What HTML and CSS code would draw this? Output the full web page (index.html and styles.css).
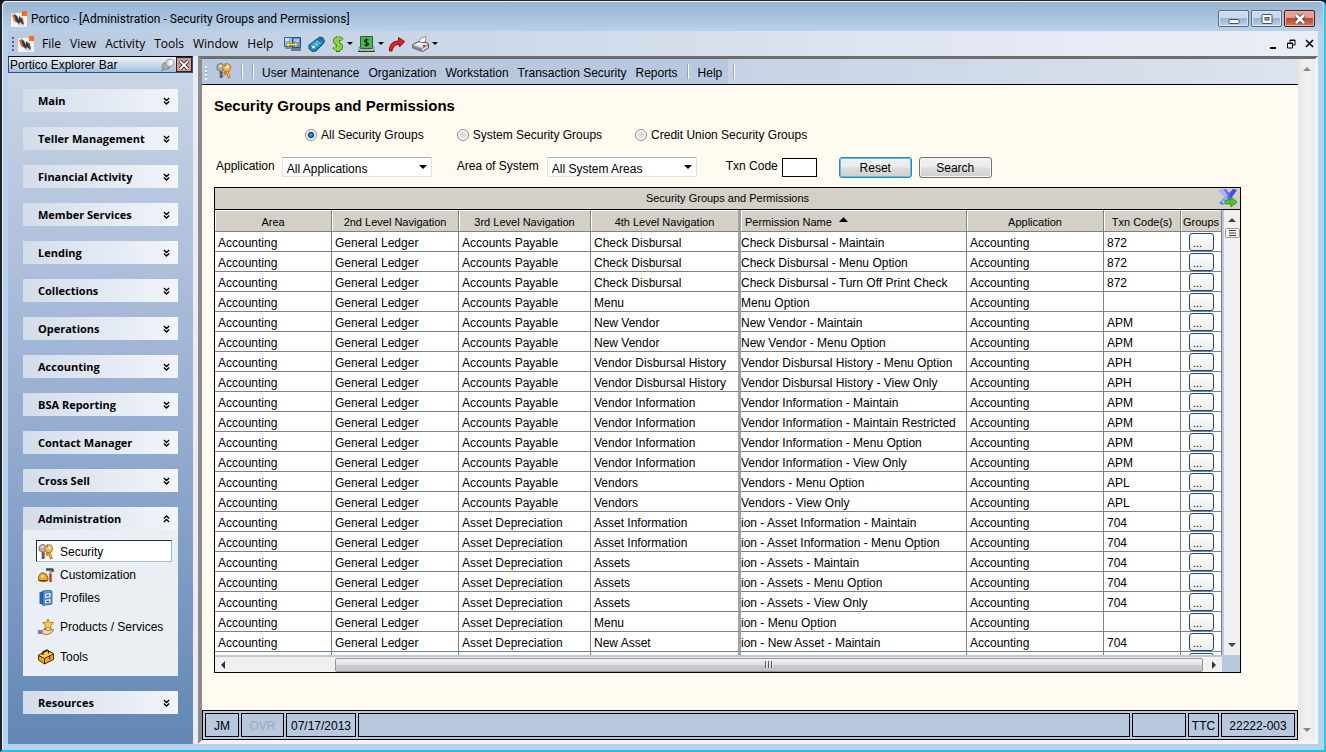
FILE: index.html
```html
<!DOCTYPE html>
<html lang="en">
<head>
<meta charset="utf-8">
<title>Portico - [Administration - Security Groups and Permissions]</title>
<link rel="stylesheet" href="styles.css">
</head>
<body>
<svg class="defs" aria-hidden="true">
  <symbol id="logo" viewBox="0 0 16 16"><path fill="#f4f1ee" d="M0 2h16v14H0z"/><path fill="#b9b4ae" d="M0 3l4-1 9 13H8z" opacity=".5"/><path fill="#e8721c" d="M1 4l3 0 2 8-3-2zM9 6l3 1 1 6-2 0z"/><path fill="#2c3a52" d="M3 3l3 2 2 4V5l3 3 2 6-4-3-1 2-3-3z"/><path fill="#ff6a13" d="M11 0h5v5h-5z"/></symbol>
  <symbol id="keys" viewBox="0 0 16 16"><path d="M5 7v8" stroke="#625c58" stroke-width="2.600"/><path d="M5.500 10h1.800M5.500 13h1.800" stroke="#625c58" stroke-width="1.400"/><path fill="#b5aca4" stroke="#6d6661" stroke-width=".8" d="M2.500 1l3.500-.6L8 3v4l-3 1.500-4-2V3z"/><path fill="#ded9d4" d="M3 2h3v2H3z"/><path d="M10.500 7l3 8" stroke="#b9741a" stroke-width="3"/><path d="M10.500 7l2.800 7" stroke="#f3b346" stroke-width="1.400"/><path d="M9 8v4" stroke="#c9811d" stroke-width="1.800"/><path fill="#f4b752" stroke="#b06a14" stroke-width=".8" d="M9 .6l4 .4 2 3-1.500 4-4 .8L6.800 6V3z"/><path fill="#fff0cf" d="M9.500 2h3v3h-3z"/><circle cx="9.500" cy="2.500" r="1" fill="#7d6b58"/></symbol>
  <symbol id="down" viewBox="0 0 8 9"><path d="M1 1l3 3 3-3M1 5l3 3 3-3" fill="none" stroke="#000" stroke-width="1.500"/></symbol>
  <symbol id="up" viewBox="0 0 8 9"><path d="M1 4l3-3 3 3M1 8l3-3 3 3" fill="none" stroke="#000" stroke-width="1.500"/></symbol>
  <symbol id="tri" viewBox="0 0 8 4"><path d="M0 0h8L4 4z"/></symbol>
</svg>
<div class="window">
  <header class="titlebar">
    <svg class="i16"><use href="#logo"/></svg>
    <h1 class="title">Portico - [Administration - Security Groups and Permissions]</h1>
    <div class="caption-buttons">
      <button class="cap" aria-label="Minimize"><svg width="12" height="12"><rect x="1" y="6.500" width="10" height="4" rx="1" fill="#fff" stroke="#4b5263"/></svg></button>
      <button class="cap" aria-label="Restore"><svg width="12" height="12"><rect x="1" y="1.500" width="10" height="9" rx="1" fill="#fff" stroke="#4b5263"/><rect x="4" y="4.500" width="4" height="2.500" fill="#8fb0d4" stroke="#4b5263"/></svg></button>
      <button class="cap close" aria-label="Close"><svg width="14" height="12"><path d="M3 2l8 8M11 2l-8 8" stroke="#4b4250" stroke-width="4.500"/><path d="M3 2l8 8M11 2l-8 8" stroke="#fff" stroke-width="2.600"/></svg></button>
    </div>
  </header>

  <nav class="menubar" aria-label="Main menu">
    <span class="grip"></span>
    <svg class="i16 menu-logo"><use href="#logo"/></svg>
    <div class="menus">
      <button>File</button><button>View</button><button>Activity</button><button>Tools</button><button>Window</button><button>Help</button>
    </div>
    <div class="tools">
      <button aria-label="Connect"><svg width="17" height="16" viewBox="0 0 17 16"><path fill="#8dbbf6" stroke="#2f5fae" d="M.5 1.500h8v9h-8z"/><path fill="#c7e0ff" d="M1 2h4v3H1z"/><path fill="#6d93c5" d="M1 11h7v2H1z"/><path fill="#5b92ea" stroke="#234c92" d="M8.500 1.500h8v10h-8z"/><path fill="#a4c8fb" d="M10 3h5v3h-5z"/><path fill="#6b7c98" d="M7 12h10v3H7z"/><path fill="#ffe14a" stroke="#a07a00" stroke-width=".7" d="M2 8.500L5 5.500V7.500h6V5.500l3 3-3 3v-2H5v2z"/></svg></button>
      <button aria-label="Phone"><svg width="17" height="16" viewBox="0 0 17 16"><path fill="#178dbd" stroke="#064765" stroke-linejoin="round" d="M1 9l8-6 3-2 3 1 1.500 3-1.500 3-7 7-4 .5-3-3z"/><path fill="#3db4e0" d="M2 9.500l8-6 4 3-8 6z"/><path d="M10 3.500l3 2.500M12 2.500l2 2" stroke="#064765"/><circle cx="5.500" cy="11" r="2" fill="#e9fbff" stroke="#0d6f99" stroke-width=".7"/><path d="M8 8l1.500 1.500" stroke="#d9f6ff"/></svg></button>
      <button class="drop" aria-label="Money"><svg width="12" height="16" viewBox="0 0 12 16"><path d="M10 4C8 1.500 3 2 3 5s6 2.500 6 5.500S4 14 2 11M6 0v16" fill="none" stroke="#2c7a14" stroke-width="4"/><path d="M10 4C8 1.500 3 2 3 5s6 2.500 6 5.500S4 14 2 11M6 0v15" fill="none" stroke="#8fd742" stroke-width="2.400"/></svg><svg class="arrow"><use href="#tri"/></svg></button>
      <button class="drop" aria-label="Cash"><svg width="17" height="16" viewBox="0 0 17 16"><path fill="#55b05c" stroke="#1c6a26" d="M2.500 .5h12v12h-12z"/><path fill="#cfe0cf" stroke="#556" stroke-width=".6" d="M1 11h1.500v2h12v-2H16v4H1z"/><path d="M0 15.500h17" stroke="#333"/><path d="M10.500 4.200c-1-1-4-1-4 .8s4 1.200 4 3-3 2-4 .7M8.500 2.500v8" fill="none" stroke="#062d0a" stroke-width="1.200"/></svg><svg class="arrow"><use href="#tri"/></svg></button>
      <button aria-label="Forward"><svg width="16" height="16" viewBox="0 0 16 16"><path fill="#e02222" stroke="#8c0909" stroke-linejoin="round" d="M.5 15c0-6 2-9.500 9-10V1.500l6 4-5 5.500V8.500C6 8.500 4 10.500 3 15z"/></svg></button>
      <button class="drop" aria-label="Print"><svg width="17" height="16" viewBox="0 0 17 16"><path fill="#fff" stroke="#777" stroke-width=".8" d="M6.500 8l2.500-6 5-1.500L13 7z"/><path fill="#d9d9d9" stroke="#444" stroke-linejoin="round" stroke-width=".9" d="M.8 8.500l6-3L9 7l5-1 2.500 2v4l-6 3.500-9.700-3.500z"/><path fill="#888" d="M1 9.500l9 2.700v3L1 12z"/><path fill="#f4f4f4" d="M3 8.500l4-2 6 1.500-3.500 2.500z"/><path d="M10.500 12l5.500-3" stroke="#777"/><path fill="#d11" d="M11 9h2v1.500h-2z"/></svg><svg class="arrow"><use href="#tri"/></svg></button>
    </div>
    <div class="mdi">
      <button aria-label="Minimize child"><svg width="8" height="10"><path d="M0 8h6v2H0z"/></svg></button>
      <button aria-label="Restore child"><svg width="9" height="10"><path d="M3 1h5v5H6M3 1v2M3 1.500h5M.5 4h5v5h-5zM.5 4.500h5" fill="none" stroke="#000"/></svg></button>
      <button aria-label="Close child"><svg width="9" height="10"><path d="M1 1l7 7M8 1L1 8" stroke="#000" stroke-width="1.600"/></svg></button>
    </div>
  </nav>

  <div class="workspace">
    <aside class="explorer">
      <div class="explorer-head">
        <h2>Portico Explorer Bar</h2>
        <button class="pin" aria-label="Auto hide"><svg width="15" height="14" viewBox="0 0 15 14"><path d="M1 13l5-4" stroke="#777"/><ellipse cx="6" cy="8" rx="4" ry="3.500" fill="#aaa" stroke="#888"/><circle cx="10" cy="5" r="4" fill="#ddd" stroke="#999"/><circle cx="11" cy="4" r="2" fill="#fff"/></svg></button>
        <button class="x" aria-label="Close explorer"><svg width="10" height="10"><path d="M1 1l8 8M9 1L1 9" stroke="#222" stroke-width="3.500"/><path d="M1 1l8 8M9 1L1 9" stroke="#fff" stroke-width="1.800"/></svg></button>
      </div>
      <nav class="groups" aria-label="Explorer">
        <button class="group">Main<svg><use href="#down"/></svg></button>
        <button class="group">Teller Management<svg><use href="#down"/></svg></button>
        <button class="group">Financial Activity<svg><use href="#down"/></svg></button>
        <button class="group">Member Services<svg><use href="#down"/></svg></button>
        <button class="group">Lending<svg><use href="#down"/></svg></button>
        <button class="group">Collections<svg><use href="#down"/></svg></button>
        <button class="group">Operations<svg><use href="#down"/></svg></button>
        <button class="group">Accounting<svg><use href="#down"/></svg></button>
        <button class="group">BSA Reporting<svg><use href="#down"/></svg></button>
        <button class="group">Contact Manager<svg><use href="#down"/></svg></button>
        <button class="group">Cross Sell<svg><use href="#down"/></svg></button>
        <div class="open-group">
          <button class="group" aria-expanded="true">Administration<svg><use href="#up"/></svg></button>
          <div class="items">
            <a class="item current" href="#security"><svg class="i16"><use href="#keys"/></svg>Security</a>
            <a class="item" href="#customization"><svg class="i16" viewBox="0 0 16 16"><path fill="#f5a71c" stroke="#6d3a00" stroke-width=".8" d="M.5 13c0-5 2-8 5.500-7 3 .7 4 4 4 7-1 2-8 2-9.500 0z"/><path fill="#ffd97a" d="M3 8.500l3-1v3H3z"/><path d="M.5 13.500h9" stroke="#6d3a00"/><path d="M8 2.500h6l1.500 2" fill="none" stroke="#444" stroke-width="2.600"/><path d="M12.500 3v5" stroke="#888" stroke-width="2"/><path d="M12.500 7v8" stroke="#c8351c" stroke-width="2.400"/></svg>Customization</a>
            <a class="item" href="#profiles"><svg class="i16" viewBox="0 0 16 16"><path fill="#1f62c0" d="M1.500 2.500L6 .5v15l-4.500-2z"/><path fill="#5f9fe8" stroke="#1b4d90" stroke-width=".7" d="M5 1l7-.7 2 1V14l-9 1.500z"/><path fill="#dfe9f4" stroke="#4a6e9c" stroke-width=".7" d="M6.500 3.500l6.500-1v5l-6.500 1zM6.500 9.500l6.500-1V13l-6.500 1z"/><path d="M8.500 5.700l2.500-.4M8.500 11.700l2.500-.4" stroke="#234" stroke-width="1.300"/></svg>Profiles</a>
            <a class="item tall" href="#products"><svg class="i16" viewBox="0 0 16 16"><path fill="#f8cf3a" stroke="#9c7207" stroke-width=".8" d="M10 0l1.500 3.500 4 .2-3 2.800.8 3.500-3.300-1.500L6.500 10l1-3.500-2.700-2.800 3.700-.2z"/><path fill="#f9d3a0" stroke="#8c5520" stroke-width=".8" d="M4 11.500l3-1.500 3 1.500 5.500-1c.5 1.500-3 4.500-6 5-2 .4-4-.5-5.500-1z"/><path fill="#8b6fd8" d="M0 11h4v4H0z"/></svg>Products / Services</a>
            <a class="item tall" href="#tools"><svg class="i16" viewBox="0 0 16 16"><path fill="#f2a714" stroke="#4a2e00" stroke-linejoin="round" d="M.5 6l9-4.500 6 3v6l-9 4.500-6-4z"/><path fill="#ffd350" d="M1.500 6.500l8-4 5 2.500-8 4z"/><path d="M.5 6.500l6 3 9-4.500M6.500 9.500V15" stroke="#4a2e00" fill="none"/><path d="M5 6V3l4-2 1.500 1V4.500" fill="none" stroke="#3a2400" stroke-width="1.400"/><path d="M11 7.500l1.200-.6v3l-1.200.6z" fill="#3a2400"/></svg>Tools</a>
          </div>
        </div>
        <button class="group">Resources<svg><use href="#down"/></svg></button>
      </nav>
    </aside>

    <section class="document">
      <div class="page">
        <nav class="subbar" aria-label="Security">
          <div class="subbar-main">
            <span class="grip light"></span>
            <button aria-label="Security keys" class="keys"><svg class="i16"><use href="#keys"/></svg></button>
            <span class="sep"></span><span class="sep second"></span>
            <button>User Maintenance</button><button>Organization</button><button>Workstation</button><button>Transaction Security</button><button>Reports</button>
            <span class="sep help-sep"></span>
            <button>Help</button>
          </div>
          <span class="sep end-sep"></span>
        </nav>

        <main class="content">
          <h2 class="heading">Security Groups and Permissions</h2>
          <form class="filters">
            <div class="radios">
              <label><input type="radio" name="scope" checked>All Security Groups</label>
              <label><input type="radio" name="scope">System Security Groups</label>
              <label><input type="radio" name="scope">Credit Union Security Groups</label>
            </div>
            <div class="fields">
              <label for="app">Application</label>
              <span class="combo"><select id="app"><option>All Applications</option></select><svg><use href="#tri"/></svg></span>
              <label for="area" class="spaced">Area of System</label>
              <span class="combo area"><select id="area"><option>All System Areas</option></select><svg><use href="#tri"/></svg></span>
              <label for="txn" class="spaced txn">Txn Code</label>
              <input id="txn" class="code" type="text">
              <button type="button" class="push focus">Reset</button>
              <button type="button" class="push">Search</button>
            </div>
          </form>

          <div class="grid">
            <div class="grid-caption">
              <span>Security Groups and Permissions</span>
              <button aria-label="Export to Excel"><svg width="20" height="20" viewBox="0 0 20 20"><path fill="#5a6bf0" d="M1 3l7-2 3 4 4-4 4 1-5 7 4 7-6 1-3-4-4 4-4-2 6-6z"/><path fill="#a9b6ff" d="M1 3l5-1 4 6-3 2z"/><path fill="#4450dc" d="M15 1l4 1-6 8-2-3z"/><path fill="#a9b6ff" d="M3 14l5-5 2 2-4 5z"/><path fill="#4dc32c" stroke="#248a14" stroke-width=".7" d="M7 12h6V9l6 5-6 5v-3H7z"/></svg></button>
            </div>
            <div class="grid-body">
              <div class="table-view">
                <table>
                  <colgroup><col class="c1"><col class="c2"><col class="c3"><col class="c4"><col class="c5"><col class="c6"><col class="c7"><col class="c8"></colgroup>
                  <thead><tr><th>Area<th>2nd Level Navigation<th>3rd Level Navigation<th>4th Level Navigation<th>Permission Name<svg class="sort" width="9" height="5"><path d="M0 5h9L4.500 0z"/></svg><th>Application<th>Txn Code(s)<th>Groups</tr></thead>
                  <tbody>
                    <tr><td>Accounting<td>General Ledger<td>Accounts Payable<td>Check Disbursal<td>Check Disbursal - Maintain<td>Accounting<td>872<td><button>...</button></tr>
                    <tr><td>Accounting<td>General Ledger<td>Accounts Payable<td>Check Disbursal<td>Check Disbursal - Menu Option<td>Accounting<td>872<td><button>...</button></tr>
                    <tr><td>Accounting<td>General Ledger<td>Accounts Payable<td>Check Disbursal<td>Check Disbursal - Turn Off Print Check<td>Accounting<td>872<td><button>...</button></tr>
                    <tr><td>Accounting<td>General Ledger<td>Accounts Payable<td>Menu<td>Menu Option<td>Accounting<td><td><button>...</button></tr>
                    <tr><td>Accounting<td>General Ledger<td>Accounts Payable<td>New Vendor<td>New Vendor - Maintain<td>Accounting<td>APM<td><button>...</button></tr>
                    <tr><td>Accounting<td>General Ledger<td>Accounts Payable<td>New Vendor<td>New Vendor - Menu Option<td>Accounting<td>APM<td><button>...</button></tr>
                    <tr><td>Accounting<td>General Ledger<td>Accounts Payable<td>Vendor Disbursal History<td>Vendor Disbursal History - Menu Option<td>Accounting<td>APH<td><button>...</button></tr>
                    <tr><td>Accounting<td>General Ledger<td>Accounts Payable<td>Vendor Disbursal History<td>Vendor Disbursal History - View Only<td>Accounting<td>APH<td><button>...</button></tr>
                    <tr><td>Accounting<td>General Ledger<td>Accounts Payable<td>Vendor Information<td>Vendor Information - Maintain<td>Accounting<td>APM<td><button>...</button></tr>
                    <tr><td>Accounting<td>General Ledger<td>Accounts Payable<td>Vendor Information<td>Vendor Information - Maintain Restricted<td>Accounting<td>APM<td><button>...</button></tr>
                    <tr><td>Accounting<td>General Ledger<td>Accounts Payable<td>Vendor Information<td>Vendor Information - Menu Option<td>Accounting<td>APM<td><button>...</button></tr>
                    <tr><td>Accounting<td>General Ledger<td>Accounts Payable<td>Vendor Information<td>Vendor Information - View Only<td>Accounting<td>APM<td><button>...</button></tr>
                    <tr><td>Accounting<td>General Ledger<td>Accounts Payable<td>Vendors<td>Vendors - Menu Option<td>Accounting<td>APL<td><button>...</button></tr>
                    <tr><td>Accounting<td>General Ledger<td>Accounts Payable<td>Vendors<td>Vendors - View Only<td>Accounting<td>APL<td><button>...</button></tr>
                    <tr><td>Accounting<td>General Ledger<td>Asset Depreciation<td>Asset Information<td>ion - Asset Information - Maintain<td>Accounting<td>704<td><button>...</button></tr>
                    <tr><td>Accounting<td>General Ledger<td>Asset Depreciation<td>Asset Information<td>ion - Asset Information - Menu Option<td>Accounting<td>704<td><button>...</button></tr>
                    <tr><td>Accounting<td>General Ledger<td>Asset Depreciation<td>Assets<td>ion - Assets - Maintain<td>Accounting<td>704<td><button>...</button></tr>
                    <tr><td>Accounting<td>General Ledger<td>Asset Depreciation<td>Assets<td>ion - Assets - Menu Option<td>Accounting<td>704<td><button>...</button></tr>
                    <tr><td>Accounting<td>General Ledger<td>Asset Depreciation<td>Assets<td>ion - Assets - View Only<td>Accounting<td>704<td><button>...</button></tr>
                    <tr><td>Accounting<td>General Ledger<td>Asset Depreciation<td>Menu<td>ion - Menu Option<td>Accounting<td><td><button>...</button></tr>
                    <tr><td>Accounting<td>General Ledger<td>Asset Depreciation<td>New Asset<td>ion - New Asset - Maintain<td>Accounting<td>704<td><button>...</button></tr>
                    <tr><td><td><td><td><td><td><td><td><button aria-label="Groups"></button></tr>
                  </tbody>
                </table>
              </div>
              <div class="vscroll">
                <svg width="8" height="4"><path d="M0 4h8L4 0z" fill="#444"/></svg>
                <svg class="vthumb" width="15" height="10"><rect x=".5" y=".5" width="14" height="9" rx="1" fill="#eee" stroke="#999"/><path d="M4 2.500h7M4 5h7M4 7.500h7" stroke="#444"/></svg>
                <svg class="vdown" width="8" height="4"><path d="M0 0h8L4 4z" fill="#444"/></svg>
              </div>
            </div>
            <div class="hscroll">
              <div class="htrack">
                <svg width="4" height="8"><path d="M4 0v8L0 4z" fill="#333"/></svg>
                <div class="hthumb"><i></i><i></i><i></i></div>
                <svg width="4" height="8"><path d="M0 0v8l4-4z" fill="#333"/></svg>
              </div>
            </div>
          </div>
        </main>

        <footer class="status">
          <span class="s-user">JM</span><span class="s-ovr">OVR</span><span class="s-date">07/17/2013</span><span class="s-msg"></span><span class="s-blank"></span><span class="s-ttc">TTC</span><span class="s-id">22222-003</span>
        </footer>
      </div>
      <div class="page-scroll">
        <svg width="8" height="4"><path d="M0 4h8L4 0z" fill="#888"/></svg>
        <svg width="8" height="4"><path d="M0 0h8L4 4z" fill="#888"/></svg>
      </div>
    </section>
  </div>
</div>
</body>
</html>
```
FILE: styles.css
```css
* { box-sizing: border-box; }
html, body { height: 100%; margin: 0; }
body { background: #10141a; font: 12px/16px "Liberation Sans", Arial, sans-serif; color: #000; }
button { font: inherit; color: inherit; background: none; border: 0; padding: 0; margin: 0; white-space: nowrap; }
svg { display: block; flex: none; }
h1, h2 { margin: 0; font-weight: normal; }
.defs { position: absolute; width: 0; height: 0; }
.i16 { width: 16px; height: 16px; }

.window {
  height: 100vh;
  display: flex;
  flex-direction: column;
  padding: 0 6px 6px;
  border: solid;
  border-width: 1px 2px 2px;
  border-color: #1f242c #2cc7e6 #1cc3dc #1f242c;
  border-radius: 6px 6px 0 0;
  background: #b9d1ea;
  box-shadow: inset 0 1px #f2f7fc, inset 1px 0 #e2edf8;
}

.titlebar { display: flex; align-items: center; height: 29px; flex: none; margin: 1px -5px 0; padding: 4px 8px 0 8px; background: linear-gradient(#99b4d1, #b9d1ea); border-radius: 5px 5px 0 0; }
.title { flex: 1; margin-left: 4px; font: 12px/16px Roboto, "Open Sans", sans-serif; }
.caption-buttons { display: flex; gap: 2px; }
.cap { width: 31px; height: 17px; display: grid; place-items: center; border: 1px solid #56697f; border-radius: 2px; background: linear-gradient(#c9daec 45%, #9ab5d3 50%, #b9d0e8); box-shadow: inset 0 0 0 1px #dce8f4; }
.cap.close { background: linear-gradient(#e2a093 45%, #c0472d 50%, #d07a62); border-color: #4a1620; box-shadow: inset 0 0 0 1px #e9b3a8; }

.menubar { display: flex; align-items: center; height: 25px; flex: none; padding: 0 4px; background: linear-gradient(90deg, #b8c9df, #cfd9e8 40%, #e6eaf4 80%, #e9edf5); font-family: "Open Sans", "Noto Sans", sans-serif; }
.grip { width: 2px; height: 14px; background: repeating-linear-gradient(#4b6a95 0 2px, transparent 2px 4px); }
.grip.light { background: repeating-linear-gradient(#f5f8fc 0 2px, #8fa3c0 2px 3px, transparent 3px 4px); }
.menu-logo { margin-left: 4px; }
.menus { display: flex; gap: 9px; margin-left: 8px; }
.tools { display: flex; align-items: center; gap: 7px; margin-left: 11px; }
.tools button { display: flex; align-items: center; gap: 3px; }
.tools .drop + button { margin-left: -2px; }
.arrow { width: 6px; height: 3px; }
.mdi { display: flex; gap: 9px; margin-left: auto; }

.workspace { flex: 1; min-height: 0; display: flex; gap: 5px; background: #e9edf2; }
.explorer { width: 185px; flex: none; display: flex; flex-direction: column; background: linear-gradient(#cbd7e6, #b0c1dc 28%, #8aa5cb 64%, #6187b5); }
.explorer-head { display: flex; align-items: center; height: 17px; flex: none; border: 1px solid #2a5485; border-top-color: #000; background: linear-gradient(#eef3f9, #a4bedd); }
.explorer-head h2 { flex: 1; padding-left: 1px; font-size: 12px; line-height: 14px; }
.pin { margin-right: 1px; }
.x { width: 16px; height: 15px; display: grid; place-items: center; border: 1px solid #431820; background: #c99a9a; }
.groups { display: flex; flex-direction: column; gap: 15px; padding: 16px 15px 0; }
.group { display: flex; align-items: center; justify-content: space-between; width: 100%; height: 23px; flex: none; padding: 0 8px 0 15px; background: linear-gradient(90deg, #d3ddea, #f2f5fa); font: bold 11px/16px "Open Sans", "Noto Sans", sans-serif; text-align: left; }
.group svg { width: 7px; height: 8px; }
.open-group { background: #eaeff4; }
.items { padding: 10px 6px 7px 13px; }
.item { display: flex; align-items: center; gap: 6px; height: 23px; padding-left: 2px; color: #000; text-decoration: none; }
.item.current { height: 22px; margin-bottom: 1px; padding: 1px 0 0 1px; border: 1px solid #a9b9d3; border-top-color: #1d2c4d; border-left-color: #1d2c4d; background: #fff; }
.item.tall { height: 30px; padding-top: 6px; }

.document { flex: 1; min-width: 0; display: flex; border: solid; border-width: 3px 3px 4px 4px; border-color: #6e6e6e #f4f4f4 #f4f4f4 #8c8c8c; background: #fffbf0; }
.page { flex: 1; min-width: 0; display: flex; flex-direction: column; }
.page-scroll { width: 17px; flex: none; display: flex; flex-direction: column; justify-content: space-between; align-items: center; padding: 8px 0; background: linear-gradient(90deg, #e6e6e6, #f1f1f1 50%, #ececec); }

.subbar { display: flex; align-items: center; height: 26px; flex: none; border-bottom: 1px solid #000; background: linear-gradient(90deg, #c5d1e3 45%, #dde3ed); }
.subbar-main { display: flex; align-items: center; gap: 9px; height: 25px; padding: 3px 6px 0 3px; background: #b8c8de; }
.keys { margin: 0 0 4px; }
.sep { width: 2px; height: 15px; margin-bottom: 3px; background: linear-gradient(90deg, #93a5c0 50%, #fff 50%); }
.second { margin-right: -1px; }
.end-sep { margin: 0 0 0 5px; }

.content { flex: 1; min-height: 0; display: flex; flex-direction: column; padding: 12px 57px 37px 12px; }
.heading { font-size: 15px; line-height: 18px; font-weight: bold; }
.filters { display: flex; flex-direction: column; }
.radios { display: flex; gap: 33px; margin: 12px 0 0 91px; }
.radios label { display: flex; align-items: center; gap: 4px; }
.radios input { appearance: none; width: 12px; height: 12px; margin: 0; border: 1px solid #8e8f8f; border-radius: 50%; background: radial-gradient(circle, #dcdcdc 35%, #f7f7f7 60%); }
.radios input:checked { background: radial-gradient(circle, #2da0d8 15%, #123a5c 38%, #f4f4f4 52%); }
.fields { display: flex; align-items: center; height: 24px; margin: 12px 0 8px 2px; }
.fields label { padding-bottom: 2px; white-space: nowrap; }
.combo { display: flex; align-items: center; width: 150px; height: 20px; margin-left: 7px; border: 1px solid #dfe3ea; border-top-color: #abadb3; background: #fff; }
.combo select { appearance: none; flex: 1; min-width: 0; height: 18px; margin: 0; padding: 3px 0 0 4px; border: 0; background: none; color: #000; font: inherit; }
.combo svg { width: 8px; height: 4px; margin-right: 4px; }
.area { margin-left: 8px; }
.spaced { margin-left: 25px; }
.txn { margin-left: 29px; }
.code { width: 35px; height: 19px; margin: 0 22px 0 4px; padding: 0 2px; border: 1px solid #000; background: #fff; font: inherit; }
.push { width: 73px; height: 21px; margin-right: 7px; padding-top: 2px; border: 1px solid #707070; border-radius: 3px; background: linear-gradient(#f2f2f2, #ebebeb 48%, #dddddd 52%, #cfcfcf); box-shadow: inset 0 0 0 1px #f6f6f6; }
.push.focus { border-color: #3c7fb1; box-shadow: inset 0 0 0 1px #48c6ef; }

.grid { flex: 1; min-height: 0; display: flex; flex-direction: column; border: 1px solid #000; background: #fff; }
.grid-caption { position: relative; display: flex; align-items: center; justify-content: center; height: 22px; flex: none; padding-bottom: 2px; border-bottom: 1px solid #000; background: #d4d0c8; font-size: 11px; }
.grid-caption button { position: absolute; right: 2px; top: 0; }
.grid-body { flex: 1; min-height: 0; display: flex; }
.table-view { flex: 1; min-width: 0; overflow: hidden; }
table { width: 100%; table-layout: fixed; border-collapse: separate; border-spacing: 0; }
.c1 { width: 117px; }
.c2 { width: 127px; }
.c3 { width: 132px; }
.c4 { width: 150px; }
.c5 { width: 226px; }
.c6 { width: 137px; }
.c7 { width: 77px; }
.c8 { width: 41px; }
th { height: 22px; padding: 2px 0 0; border-right: 1px solid #808080; border-bottom: 1px solid #808080; background: #d4d0c8; box-shadow: inset 1px 1px #fff; font-size: 11px; line-height: 14px; font-weight: normal; white-space: nowrap; }
td { height: 20px; padding: 4px 0 0 3px; border-right: 1px solid #808080; border-bottom: 1px solid #808080; line-height: 15px; white-space: nowrap; overflow: hidden; }
th:nth-child(4), td:nth-child(4) { border-right: 3px solid #a3a3a3; }
th:nth-child(5) { padding-left: 4px; text-align: left; }
td:nth-child(5) { padding-left: 0; }
td:last-child { padding: 0 0 0 8px; }
td button { display: block; width: 25px; height: 18px; padding: 3px 0 0 3px; border: 1px solid #1b4a7c; border-radius: 3px; background: linear-gradient(#fff, #ecebe5); font-size: 11px; line-height: 12px; text-align: left; }
.sort { display: inline-block; margin: 0 0 4px 7px; }
.vscroll { width: 18px; flex: none; display: flex; flex-direction: column; align-items: center; padding: 8px 0; border-left: 2px solid #b8c8de; background: #f0f0f0; }
.vthumb { margin-top: 6px; }
.vdown { margin-top: auto; }
.hscroll { display: flex; height: 17px; flex: none; padding-right: 18px; border-top: 2px solid #b8c8de; background: #b8c8de; }
.htrack { flex: 1; display: flex; align-items: center; padding: 0 6px; background: #f0f0f0; }
.hthumb { flex: 1; display: flex; align-items: center; justify-content: center; gap: 1px; height: 14px; margin: 0 9px 0 110px; border: 1px solid #979797; border-radius: 2px; background: linear-gradient(#f3f3f3, #e0e0e2 48%, #cbcbce 52%, #c4c4c8); }
.hthumb i { width: 2px; height: 7px; background: linear-gradient(90deg, #555 50%, #eee 50%); }

.status { display: flex; gap: 2px; height: 30px; flex: none; padding: 2px; border: 1px solid #000; background: #b8c8de; }
.status span { display: flex; align-items: center; justify-content: center; padding-top: 2px; border: 1px solid #000; }
.s-user { width: 34px; }
.status .s-ovr { width: 43px; color: #a3aab5; }
.s-date { width: 70px; }
.s-msg { flex: 1; }
.s-blank { width: 54px; }
.s-ttc { width: 31px; }
.s-id { width: 74px; }
```
